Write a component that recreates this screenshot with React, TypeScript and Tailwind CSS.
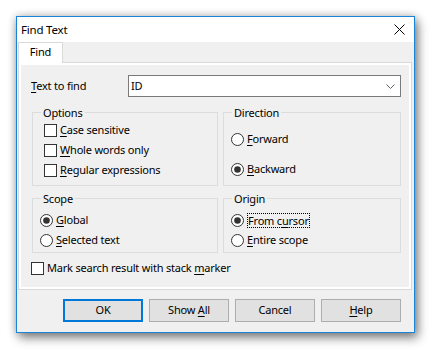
import React from 'react';

// Access key underline
function Key({ children }: { children: React.ReactNode }) {
    return <span className="underline decoration-1 underline-offset-[2px]">{children}</span>;
}

function CheckBox() {
    return <span className="block w-[13px] h-[13px] shrink-0 border border-[#333333] bg-white" />;
}

function Radio({ checked = false }: { checked?: boolean }) {
    return (
        <svg width="13" height="13" viewBox="0 0 13 13" className="shrink-0">
            <circle cx="6.5" cy="6.5" r="6" fill="#ffffff" stroke="#333333" strokeWidth="1" />
            {checked && <circle cx="6.5" cy="6.5" r="3.3" fill="#333333" />}
        </svg>
    );
}

function GroupBox({ title, className = "", children }: { title: string; className?: string; children?: React.ReactNode }) {
    return (
        <div className={`flex flex-col border border-[#dcdcdc] ${className}`}>
            <span className="-mt-[7px] ml-[8px] h-[14px] w-fit bg-[#f0f0f0] px-[2px] leading-[14px]">{title}</span>
            {children}
        </div>
    );
}

function Row({ children, className = "" }: { children: React.ReactNode; className?: string }) {
    return <div className={`flex h-[20px] items-center gap-[3px] ${className}`}>{children}</div>;
}

function Button({ children, isDefault = false }: { children: React.ReactNode; isDefault?: boolean }) {
    return (
        <button
            className={`flex h-[23px] w-[80px] items-center justify-center bg-[#e1e1e1] ${
                isDefault ? 'border-2 border-[#0078d7]' : 'border border-[#adadad]'
            }`}
        >
            <span>{children}</span>
        </button>
    );
}

export default function App() {
    return (
        <div className="min-h-screen bg-white pl-[16px] pt-[16px] text-[11px] tracking-[-0.2px] text-black font-['Noto_Sans',sans-serif]">
            <div className="flex h-[317px] w-[399px] flex-col border border-[#1883d7] bg-[#f0f0f0] shadow-[0_0_8px_rgba(0,0,0,0.25),3px_5px_10px_rgba(0,0,0,0.45)]">
                {/* Title bar */}
                <div className="flex h-[25px] shrink-0 items-center justify-between bg-white pl-[4px] pr-[9px] text-[11.5px]">
                    <span>Find Text</span>
                    <svg width="11" height="11" viewBox="0 0 11 11">
                        <path d="M0.5 0.5 L10.5 10.5 M10.5 0.5 L0.5 10.5" stroke="#000000" strokeWidth="1" />
                    </svg>
                </div>

                {/* Tabs */}
                <div className="pl-[1px]">
                    <div className="flex h-[21px] w-[394px]">
                        <div className="flex w-[45px] items-center justify-center border-l border-r border-t border-[#d9d9d9] bg-white pb-[1px]">
                            Find
                        </div>
                        <div className="flex-1 border-b border-[#d9d9d9]" />
                    </div>

                    <div className="w-[394px] border-b border-l border-r border-[#d9d9d9] bg-white p-[2px]">
                        <div className="flex h-[222px] flex-col bg-[#f0f0f0]">
                            {/* Text to find */}
                            <div className="mt-[10px] flex h-[22px] items-center">
                                <span className="w-[107px] pl-[10px]">
                                    <Key>T</Key>ext to find
                                </span>
                                <div className="flex h-[22px] w-[273px] items-center justify-between border border-[#7a7a7a] bg-white pl-[2px] pr-[5px]">
                                    <span>ID</span>
                                    <svg width="9" height="5" viewBox="0 0 9 5">
                                        <path d="M0.5 0.5 L4.5 4.5 L8.5 0.5" fill="none" stroke="#606060" strokeWidth="1" />
                                    </svg>
                                </div>
                            </div>

                            {/* Options / Direction */}
                            <div className="ml-[11px] mt-[15px] flex gap-[5px]">
                                <GroupBox title="Options" className="h-[74px] w-[186px]">
                                    <div className="flex flex-col pl-[11px]">
                                        <Row>
                                            <CheckBox />
                                            <span><Key>C</Key>ase sensitive</span>
                                        </Row>
                                        <Row>
                                            <CheckBox />
                                            <span><Key>W</Key>hole words only</span>
                                        </Row>
                                        <Row>
                                            <CheckBox />
                                            <span><Key>R</Key>egular expressions</span>
                                        </Row>
                                    </div>
                                </GroupBox>
                                <GroupBox title="Direction" className="h-[74px] w-[178px]">
                                    <div className="flex flex-col gap-[10px] pl-[7px] pt-[9px]">
                                        <Row>
                                            <Radio />
                                            <span><Key>F</Key>orward</span>
                                        </Row>
                                        <Row>
                                            <Radio checked />
                                            <span><Key>B</Key>ackward</span>
                                        </Row>
                                    </div>
                                </GroupBox>
                            </div>

                            {/* Scope / Origin */}
                            <div className="ml-[11px] mt-[12px] flex gap-[5px]">
                                <GroupBox title="Scope" className="h-[55px] w-[186px]">
                                    <div className="flex flex-col pl-[7px] pt-[4px]">
                                        <Row>
                                            <Radio checked />
                                            <span><Key>G</Key>lobal</span>
                                        </Row>
                                        <Row>
                                            <Radio />
                                            <span><Key>S</Key>elected text</span>
                                        </Row>
                                    </div>
                                </GroupBox>
                                <GroupBox title="Origin" className="h-[55px] w-[178px]">
                                    <div className="flex flex-col pl-[7px] pt-[4px]">
                                        <Row className="gap-[2px]">
                                            <Radio checked />
                                            <span className="border border-dotted border-black leading-[13px]">
                                                From c<Key>u</Key>rsor
                                            </span>
                                        </Row>
                                        <Row>
                                            <Radio />
                                            <span><Key>E</Key>ntire scope</span>
                                        </Row>
                                    </div>
                                </GroupBox>
                            </div>

                            <Row className="mt-[5px] pl-[10px]">
                                <CheckBox />
                                <span>Mark search result with stack <Key>m</Key>arker</span>
                            </Row>
                        </div>
                    </div>
                </div>

                {/* Buttons */}
                <div className="mt-[9px] flex justify-end gap-[6px] pr-[13px]">
                    <Button isDefault>OK</Button>
                    <Button>Show <Key>A</Key>ll</Button>
                    <Button>Cancel</Button>
                    <Button><Key>H</Key>elp</Button>
                </div>
            </div>
        </div>
    );
}
